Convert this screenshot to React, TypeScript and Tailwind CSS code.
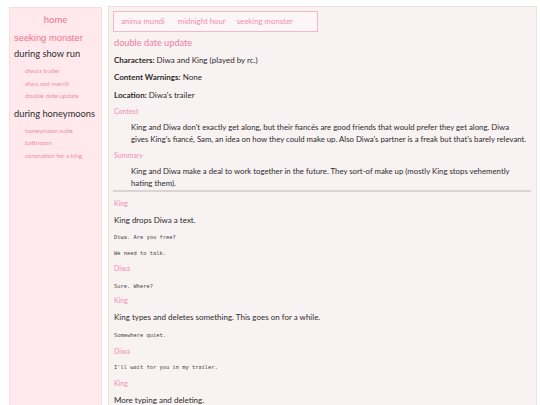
import React from "react";

const label = "text-[7px] leading-[10px] text-[#f28db0]";
const body = "text-[8px] leading-[12px] text-[#2c2c2c]";
const mono = "text-[5.4px] leading-[8px] text-[#444] font-['DejaVu_Sans_Mono',monospace]";

export default function App() {
  return (
    <div className="h-[405px] overflow-hidden bg-white">
      <div className="flex items-stretch pl-[9px] pr-[3px] pt-[6px] font-['Lato',sans-serif] h-[412px]">
        <aside className="mt-[1px] w-[93px] shrink-0 border border-[#f7dde2] bg-[#ffe9ec] px-[4px] pt-[6px]">
          <div className="text-center text-[9.5px] leading-[12px] text-[#ec7392]">home</div>
          <div className="mt-[5px] whitespace-nowrap text-[9.4px] leading-[14px] text-[#f2718f] font-['Liberation_Sans',sans-serif]">seeking monster</div>
          <div className="mt-[3px] text-[9.3px] leading-[12px] text-[#2c2c2c]">during show run</div>
          <ul className="mt-[5px] pl-[11px] text-[6.3px] leading-[12.5px] text-[#f28da8]">
            <li>diwa's trailer</li>
            <li>diwa and merrill</li>
            <li>double date update</li>
          </ul>
          <div className="mt-[5px] text-[9.3px] leading-[12px] text-[#2c2c2c] whitespace-nowrap">during honeymoons</div>
          <ul className="mt-[5px] pl-[11px] text-[6.3px] leading-[12.5px] text-[#f28da8]">
            <li>honeymoon suite</li>
            <li>bathroom</li>
            <li>coronation for a king</li>
          </ul>
        </aside>
        <main className="ml-[6px] flex-1 border border-[#ece0e2] bg-[#f9f2f3] px-[4px] pt-[4px]">
          <nav className="flex h-[21px] w-[205px] items-center border border-[#f5b8ca] bg-[#fcf6f7] pl-[7px] text-[7.8px] text-[#f28db0]">
            <span>anima mundi</span>
            <span className="ml-[13px]">midnight hour</span>
            <span className="ml-[11px]">seeking monster</span>
          </nav>
          <div className="px-[1px]">
            <h1 className="mt-[4px] text-[9.2px] leading-[14px] text-[#f07aa2]">double date update</h1>
            <p className={`mt-[4px] ${body}`}><b>Characters:</b> Diwa and King (played by rc.)</p>
            <p className={`mt-[5px] ${body}`}><b>Content Warnings:</b> None</p>
            <p className={`mt-[6px] ${body}`}><b>Location:</b> Diwa's trailer</p>
            <div className={`mt-[5px] ${label}`}>Context</div>
            <p className="mt-[5px] pl-[17px] whitespace-nowrap text-[7.8px] leading-[12px] text-[#2c2c2c]">
              King and Diwa don't exactly get along, but their fiancés are good friends that would prefer they get along. Diwa
              <br />
              gives King's fiancé, Sam, an idea on how they could make up. Also Diwa's partner is a freak but that's barely relevant.
            </p>
            <div className={`mt-[5px] ${label}`}>Summary</div>
            <p className="mt-[5px] pl-[17px] whitespace-nowrap text-[7.8px] leading-[12px] text-[#2c2c2c]">
              King and Diwa make a deal to work together in the future. They sort-of make up (mostly King stops vehemently
              <br />
              hating them).
            </p>
          </div>
          <hr className="mt-[1px] mr-[1px] h-[2px] border-0 bg-[#dcd3d5]" />
          <div className="px-[1px]">
            <div className={`mt-[6px] ${label}`}>King</div>
            <p className={`mt-[6px] ${body}`}>King drops Diwa a text.</p>
            <p className={`mt-[7px] ${mono}`}>Diwa. Are you free?</p>
            <p className={`mt-[8px] ${mono}`}>We need to talk.</p>
            <div className={`mt-[6px] ${label}`}>Diwa</div>
            <p className={`mt-[9px] ${mono}`}>Sure. Where?</p>
            <div className={`mt-[5px] ${label}`}>King</div>
            <p className={`mt-[6px] ${body}`}>King types and deletes something. This goes on for a while.</p>
            <p className={`mt-[8px] ${mono}`}>Somewhere quiet.</p>
            <div className={`mt-[7px] ${label}`}>Diwa</div>
            <p className={`mt-[7px] ${mono}`}>I'll wait for you in my trailer.</p>
            <div className={`mt-[7px] ${label}`}>King</div>
            <p className={`mt-[6px] ${body}`}>More typing and deleting.</p>
          </div>
        </main>
      </div>
    </div>
  );
}
